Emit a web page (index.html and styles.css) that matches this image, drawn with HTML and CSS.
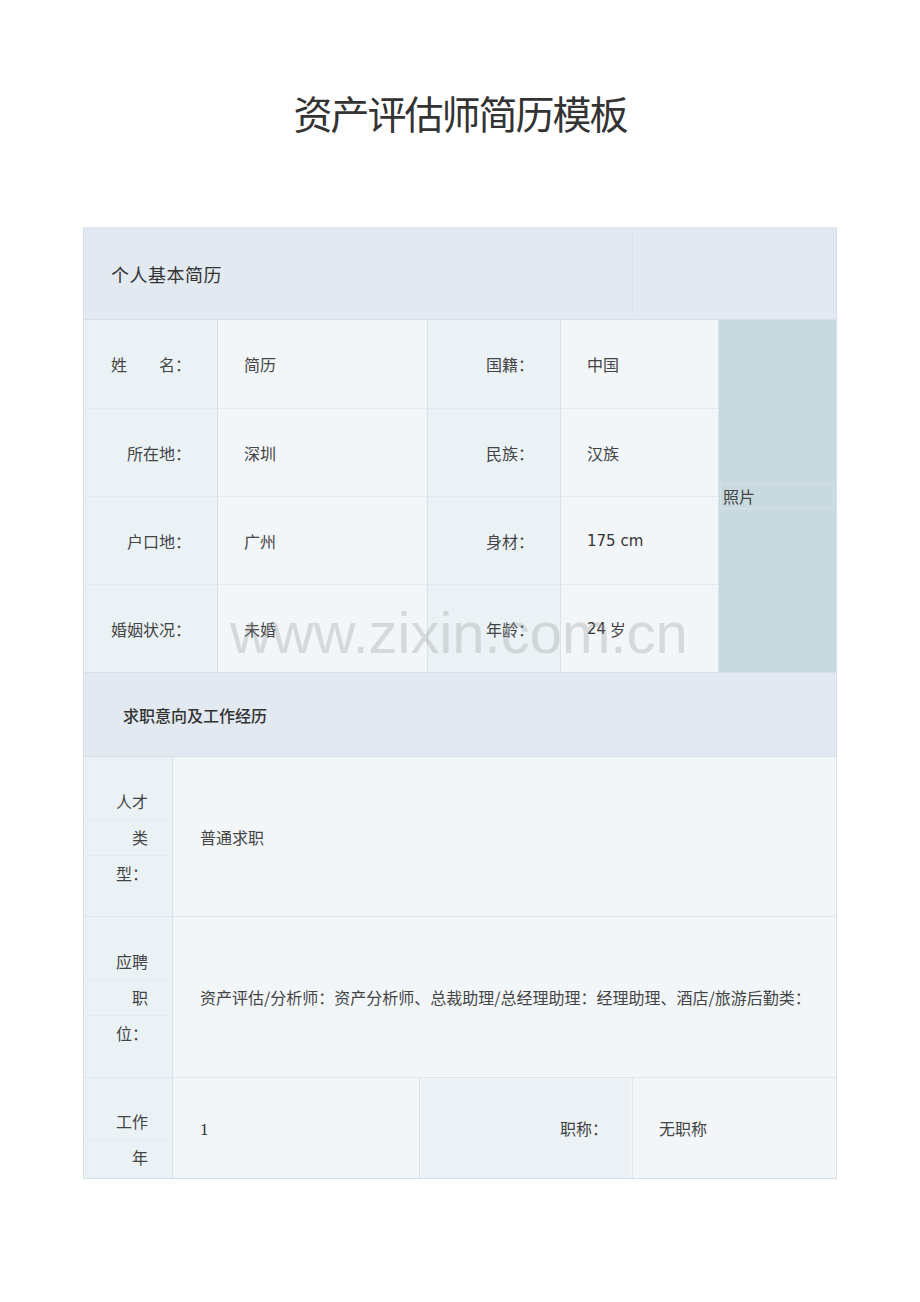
FILE: index.html
```html
<!DOCTYPE html>
<html lang="zh-CN">
<head>
<meta charset="utf-8">
<title>资产评估师简历模板</title>
<link rel="stylesheet" href="styles.css">
</head>
<body>
<div class="page">
  <h1 class="title">资产评估师简历模板</h1>
  <div class="sheet">
    <div class="head1">
      <span class="head1-text">个人基本简历</span>
      <i class="head1-rule"></i>
      <i class="head1-rule"></i>
    </div>
    <div class="basic">
      <div class="lab">姓&emsp;&emsp;名：</div>
      <div class="val">简历</div>
      <div class="lab">国籍：</div>
      <div class="val">中国</div>
      <div class="photo"><div class="photo-box">照片</div></div>

      <div class="lab">所在地：</div>
      <div class="val">深圳</div>
      <div class="lab">民族：</div>
      <div class="val">汉族</div>

      <div class="lab">户口地：</div>
      <div class="val">广州</div>
      <div class="lab">身材：</div>
      <div class="val"><span class="num">175 cm</span></div>

      <div class="lab last">婚姻状况：</div>
      <div class="val last">未婚</div>
      <div class="lab last">年龄：</div>
      <div class="val last"><span class="num">24</span>&nbsp;岁</div>
    </div>
    <div class="head2">求职意向及工作经历</div>
    <div class="row row-type">
      <div class="slab">
        <div class="ln">人才</div>
        <div class="ln">类</div>
        <div class="ln">型：</div>
      </div>
      <div class="sval">普通求职</div>
    </div>
    <div class="row row-job">
      <div class="slab">
        <div class="ln">应聘</div>
        <div class="ln">职</div>
        <div class="ln">位：</div>
      </div>
      <div class="sval">资产评估/分析师：资产分析师、总裁助理/总经理助理：经理助理、酒店/旅游后勤类：</div>
    </div>
    <div class="row row-years">
      <div class="slab top">
        <div class="ln">工作</div>
        <div class="ln">年</div>
      </div>
      <div class="yval"><span class="serif-num">1</span></div>
      <div class="ylab">职称：</div>
      <div class="yval2">无职称</div>
    </div>
  </div>
  <div class="wm">www.zixin.com.cn</div>
</div>
</body>
</html>
```

FILE: styles.css
```css
* {
  box-sizing: border-box;
}

body {
  margin: 0;
  background: #ffffff;
  font-family: "Noto Sans CJK SC", "Noto Sans", sans-serif;
  color: #444444;
}

.page {
  position: relative;
  width: 920px;
  height: 1302px;
  padding-top: 88px;
  overflow: hidden;
}

.title {
  margin: 0 0 91px;
  text-align: center;
  font-size: 39px;
  line-height: 48px;
  font-weight: 400;
  letter-spacing: -2px;
  color: #333333;
}

.sheet {
  width: 754px;
  margin-left: 83px;
  border: 1px solid #d5e0e6;
  border-top-color: #e0e8ee;
}

/* section header 1 */
.head1 {
  height: 92px;
  display: grid;
  grid-template-columns: 548px 201px 1fr;
  background: #e2e9f0;
  border-bottom: 1px solid #d3dee5;
}

.head1-text {
  display: flex;
  align-items: center;
  padding-left: 27px;
  font-size: 18px;
  letter-spacing: 0.5px;
  color: #333333;
}

.head1-rule {
  margin: 4px 0 5px;
  border-left: 1px solid #dbe3ea;
}

/* basic info grid */
.basic {
  display: grid;
  grid-template-columns: 134px 210px 133px 158px 117px;
  grid-template-rows: 89px 88px 88px 88px;
}

.lab,
.val {
  display: flex;
  align-items: center;
  font-size: 16px;
  border-right: 1px solid #d8e2e8;
  border-bottom: 1px solid #e4eaef;
}

.lab {
  justify-content: flex-end;
  padding-right: 26px;
  background: #ebf2f6;
}

.val {
  justify-content: flex-start;
  padding-left: 26px;
  background: #f2f6f9;
}

.lab.last,
.val.last {
  border-bottom-color: #d6e0e7;
}

.num {
  font-family: "DejaVu Sans", sans-serif;
  font-size: 15px;
  color: #333333;
}

.photo {
  grid-column: 5;
  grid-row: 1 / 5;
  display: flex;
  align-items: center;
  padding: 0 2px 0 1px;
  background: #c8dadf;
  border-bottom: 1px solid #d6e0e7;
}

.photo-box {
  width: 100%;
  height: 26px;
  line-height: 24px;
  padding-left: 2px;
  font-size: 16px;
  color: #444444;
  border: 1px solid #d2e1e5;
}

/* section header 2 */
.head2 {
  height: 84px;
  display: flex;
  align-items: center;
  padding-left: 39px;
  font-size: 16px;
  font-weight: 500;
  color: #333333;
  background: #e2e9f0;
  border-bottom: 1px solid #d6e0e7;
}

.row {
  display: grid;
  grid-template-columns: 89px 663px;
  border-bottom: 1px solid #dfe7ec;
}

.row-type {
  height: 160px;
}

.row-job {
  height: 161px;
}

.row-years {
  height: 100px;
  grid-template-columns: 89px 247px 213px 203px;
  border-bottom: none;
  overflow: hidden;
}

.slab {
  display: flex;
  flex-direction: column;
  justify-content: center;
  padding: 0 3px;
  background: #ebf2f6;
  border-right: 1px solid #d8e2e8;
  font-size: 16px;
}

.slab.top {
  justify-content: flex-start;
  padding-top: 25px;
}

.ln {
  flex: none;
  height: 36px;
  line-height: 36px;
  text-align: right;
  padding-right: 21px;
}

.ln + .ln {
  border-top: 1px solid #e3eaef;
  line-height: 34px;
}

.sval {
  display: flex;
  align-items: center;
  padding-left: 27px;
  font-size: 16px;
  background: #f2f6f9;
}

.yval,
.ylab,
.yval2 {
  padding-top: 38px;
  line-height: 24px;
  font-size: 16px;
}

.yval {
  padding-left: 27px;
  background: #f2f6f9;
  border-right: 1px solid #d8e2e8;
}

.serif-num {
  font-family: "Liberation Serif", serif;
  font-size: 17px;
  color: #333333;
}

.ylab {
  text-align: right;
  padding-right: 24px;
  background: #ebf1f5;
  border-right: 1px solid #dde6eb;
  box-shadow: inset 1px 1px 0 #f2f6f8, inset -1px 0 0 #f2f6f8;
}

.yval2 {
  padding-left: 26px;
  background: #f2f6f9;
}

/* watermark overlay */
.wm {
  position: absolute;
  left: 230px;
  top: 604px;
  font-family: "Liberation Sans", Arial, sans-serif;
  font-size: 58px;
  line-height: 58px;
  color: rgba(150, 150, 150, 0.3);
  pointer-events: none;
  white-space: nowrap;
}
```
